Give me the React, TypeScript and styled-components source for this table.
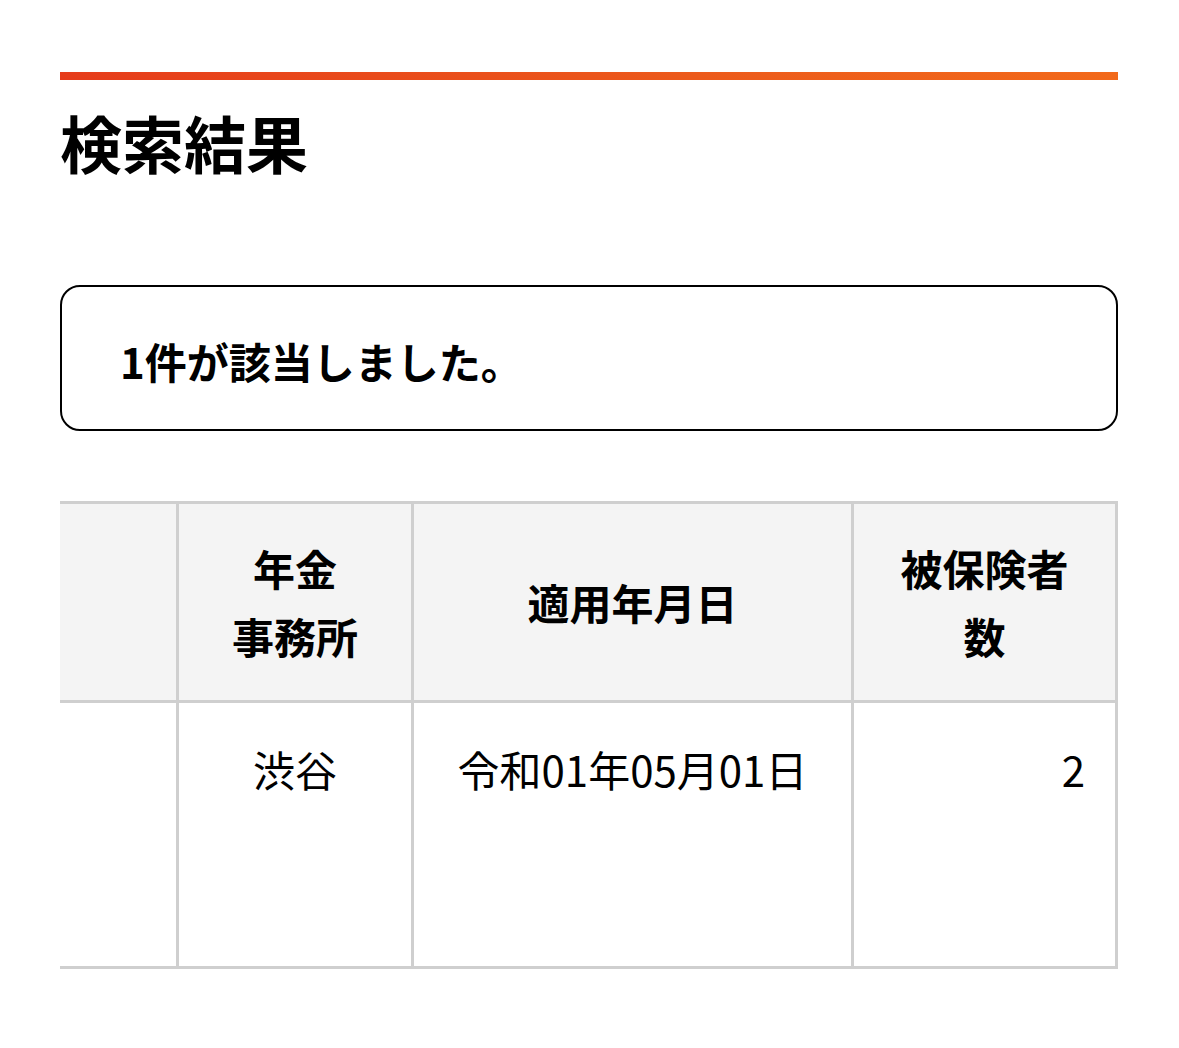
import React from "react";
import styled, { createGlobalStyle } from "styled-components";

const GlobalStyle = createGlobalStyle`
  html, body {
    margin: 0;
    padding: 0;
    background: #ffffff;
  }
  body {
    font-family: "Noto Sans CJK JP", "Noto Sans", sans-serif;
    color: #000000;
  }
  * { box-sizing: border-box; }
`;

const Page = styled.main`
  padding: 72px 61px 60px 60px;
  display: flex;
  flex-direction: column;
`;

const AccentBar = styled.div`
  height: 8px;
  background: linear-gradient(90deg, #e63c1b 0%, #ec5a1b 60%, #f2691a 100%);
`;

const Title = styled.h1`
  margin: 19px 0 0;
  font-size: 62px;
  line-height: 87px;
  font-weight: 700;
  letter-spacing: 0;
`;

const Notice = styled.section`
  margin-top: 99px;
  border: 2.5px solid #000000;
  border-radius: 20px;
  padding: 40px 58px 34px;
`;

const NoticeText = styled.p`
  margin: 0;
  font-size: 42px;
  line-height: 68px;
  font-weight: 700;
`;

const TableScroller = styled.div`
  margin-top: 70px;
  overflow: hidden;
`;

const Table = styled.table`
  width: 1058px;
  table-layout: fixed;
  border-collapse: separate;
  border-spacing: 0;
  border-top: 3px solid #cfcfcf;
`;

const Cell = styled.td<{ $align?: "left" | "center" | "right" }>`
  border-right: 3px solid #cfcfcf;
  border-bottom: 3px solid #cfcfcf;
  border-left: none;
  font-size: 42px;
  line-height: 68px;
  text-align: ${(p) => p.$align ?? "center"};
`;

const HeadCell = styled(Cell).attrs({ as: "th" })`
  background: #f4f4f4;
  font-weight: 700;
  height: 199px;
  padding: 0 20px;
  vertical-align: middle;
`;

const BodyCell = styled(Cell)`
  font-weight: 400;
  height: 266px;
  padding: 32px 30px;
  vertical-align: top;
`;

const columns = [119, 235, 440, 264];

export default function App() {
  return (
    <>
      <GlobalStyle />
      <Page>
        <AccentBar />
        <Title>検索結果</Title>
        <Notice>
          <NoticeText>1件が該当しました。</NoticeText>
        </Notice>
        <TableScroller>
          <Table>
            <colgroup>
              {columns.map((w, i) => (
                <col key={i} style={{ width: w }} />
              ))}
            </colgroup>
            <thead>
              <tr>
                <HeadCell />
                <HeadCell>
                  年金
                  <br />
                  事務所
                </HeadCell>
                <HeadCell>適用年月日</HeadCell>
                <HeadCell>
                  被保険者
                  <br />
                  数
                </HeadCell>
              </tr>
            </thead>
            <tbody>
              <tr>
                <BodyCell />
                <BodyCell>渋谷</BodyCell>
                <BodyCell>令和01年05月01日</BodyCell>
                <BodyCell $align="right">2</BodyCell>
              </tr>
            </tbody>
          </Table>
        </TableScroller>
      </Page>
    </>
  );
}
